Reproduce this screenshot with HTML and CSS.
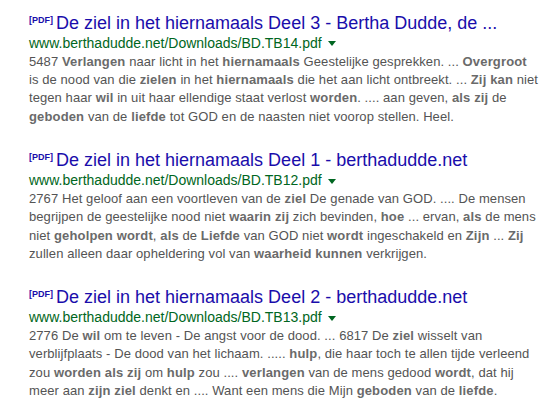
FILE: index.html
```html
<!DOCTYPE html>
<html lang="nl">
<head>
    <meta charset="UTF-8">
    <title>De ziel in het hiernamaals - zoekresultaten</title>
    <link rel="stylesheet" href="styles.css">
</head>
<body>
    <div class="results">
        <div class="result">
            <h3 class="title"><span class="filetype">[PDF]</span> <a href="#">De ziel in het hiernamaals Deel 3 - Bertha Dudde, de ...</a></h3>
            <div class="url">www.berthadudde.net/Downloads/BD.TB14.pdf<span class="arrow"></span></div>
            <div class="snippet">5487 <em>Verlangen</em> naar licht in het <em>hiernamaals</em> Geestelijke gesprekken. ... <em>Overgroot</em><br>
                is de nood van die <em>zielen</em> in het <em>hiernamaals</em> die het aan licht ontbreekt. ... <em>Zij kan</em> niet<br>
                tegen haar <em>wil</em> in uit haar ellendige staat verlost <em>worden</em>. .... aan geven, <em>als zij</em> de<br>
                <em>geboden</em> van de <em>liefde</em> tot GOD en de naasten niet voorop stellen. Heel.</div>
        </div>

        <div class="result">
            <h3 class="title"><span class="filetype">[PDF]</span> <a href="#">De ziel in het hiernamaals Deel 1 - berthadudde.net</a></h3>
            <div class="url">www.berthadudde.net/Downloads/BD.TB12.pdf<span class="arrow"></span></div>
            <div class="snippet">2767 Het geloof aan een voortleven van de <em>ziel</em> De genade van GOD. .... De mensen<br>
                begrijpen de geestelijke nood niet <em>waarin zij</em> zich bevinden, <em>hoe</em> ... ervan, <em>als</em> de mens<br>
                niet <em>geholpen wordt</em>, <em>als</em> de <em>Liefde</em> van GOD niet <em>wordt</em> ingeschakeld en <em>Zijn</em> ... <em>Zij</em><br>
                zullen alleen daar opheldering vol van <em>waarheid kunnen</em> verkrijgen.</div>
        </div>

        <div class="result">
            <h3 class="title"><span class="filetype">[PDF]</span> <a href="#">De ziel in het hiernamaals Deel 2 - berthadudde.net</a></h3>
            <div class="url">www.berthadudde.net/Downloads/BD.TB13.pdf<span class="arrow"></span></div>
            <div class="snippet">2776 De <em>wil</em> om te leven - De angst voor de dood. ... 6817 De <em>ziel</em> wisselt van<br>
                verblijfplaats - De dood van het lichaam. ..... <em>hulp</em>, die haar toch te allen tijde verleend<br>
                zou <em>worden als zij</em> om <em>hulp</em> zou .... <em>verlangen</em> van de mens gedood <em>wordt</em>, dat hij<br>
                meer aan <em>zijn ziel</em> denkt en .... Want een mens die Mijn <em>geboden</em> van de <em>liefde</em>.</div>
        </div>
    </div>
</body>
</html>
```

FILE: styles.css
```css
body {
    margin: 0;
    padding: 0;
    background: #fff;
    font-family: Arial, "Liberation Sans", sans-serif;
}

.results {
    padding: 13px 0 0 29px;
}

.result {
    margin-bottom: 24px;
}

.title {
    margin: 0;
    font-size: 18px;
    font-weight: normal;
    line-height: 1.2;
    white-space: nowrap;
}

.title a {
    color: #1a0dab;
    text-decoration: none;
}

.filetype {
    color: #1a0dab;
    font-size: 9px;
    font-weight: bold;
    vertical-align: 6px;
    margin-right: -2px;
}

.url {
    color: #006621;
    font-size: 14px;
    line-height: 17px;
    white-space: nowrap;
}

.arrow {
    display: inline-block;
    margin-left: 6px;
    vertical-align: middle;
    border-top: 5px solid #006621;
    border-left: 4px solid transparent;
    border-right: 4px solid transparent;
}

.snippet {
    margin-top: 1px;
    color: #545454;
    font-size: 13px;
    line-height: 18.4px;
    letter-spacing: 0.08px;
    white-space: nowrap;
}

.snippet em {
    color: #6a6a6a;
    font-style: normal;
    font-weight: bold;
    letter-spacing: 0.15px;
}
```
